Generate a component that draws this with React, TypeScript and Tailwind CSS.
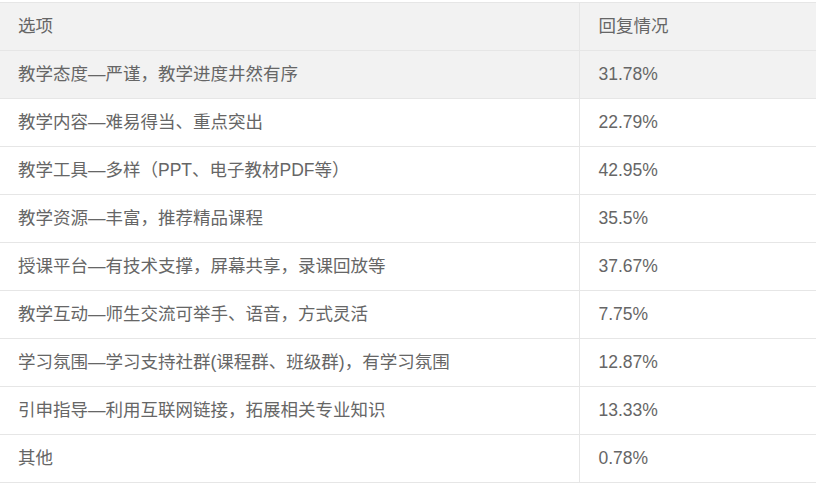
const rows = [
  { label: "教学态度—严谨，教学进度井然有序", value: "31.78%" },
  { label: "教学内容—难易得当、重点突出", value: "22.79%" },
  { label: "教学工具—多样（PPT、电子教材PDF等）", value: "42.95%" },
  { label: "教学资源—丰富，推荐精品课程", value: "35.5%" },
  { label: "授课平台—有技术支撑，屏幕共享，录课回放等", value: "37.67%" },
  { label: "教学互动—师生交流可举手、语音，方式灵活", value: "7.75%" },
  { label: "学习氛围—学习支持社群(课程群、班级群)，有学习氛围", value: "12.87%" },
  { label: "引申指导—利用互联网链接，拓展相关专业知识", value: "13.33%" },
  { label: "其他", value: "0.78%" },
];

export default function App() {
  return (
    <div className="w-[816px] h-[485px] bg-white pt-[2px] overflow-hidden font-['Liberation_Sans','Noto_Sans_CJK_SC',sans-serif] text-[17.5px] text-[#666666]">
      <table className="w-[830px] border-collapse table-fixed">
        <colgroup>
          <col className="w-[579px]" />
          <col />
        </colgroup>
        <thead>
          <tr className="h-[48px] bg-[#f2f2f2]">
            <th className="border-y border-r border-[#e6e6e6] pl-[18px] text-left font-normal">选项</th>
            <th className="border-y border-[#e6e6e6] pl-[19px] text-left font-normal">回复情况</th>
          </tr>
        </thead>
        <tbody>
          {rows.map((r, i) => (
            <tr key={r.label} className={`h-[48px] ${i === 0 ? "bg-[#f2f2f2]" : "bg-white"}`}>
              <td className="border-b border-r border-[#e6e6e6] pl-[18px]">{r.label}</td>
              <td className="border-b border-[#e6e6e6] pl-[19px]">{r.value}</td>
            </tr>
          ))}
        </tbody>
      </table>
    </div>
  );
}
